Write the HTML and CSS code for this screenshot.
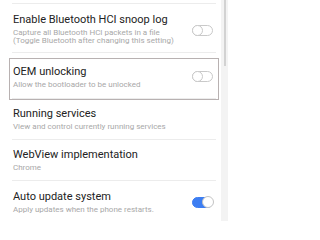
FILE: index.html
```html
<!DOCTYPE html>
<html>
<head>
<meta charset="utf-8">
<link rel="stylesheet" href="styles.css">
</head>
<body>
<div class="screen">
  <div class="list">
    <div class="divider"></div>
    <div class="item item-first">
      <div class="text">
        <div class="title">Enable Bluetooth HCI snoop log</div>
        <div class="sub">Capture all Bluetooth HCI packets in a file<br>(Toggle Bluetooth after changing this setting)</div>
      </div>
      <div class="toggle toggle-low"><span class="knob"></span></div>
    </div>
    <div class="divider"></div>
    <div class="item item-oem">
      <div class="text">
        <div class="title">OEM unlocking</div>
        <div class="sub">Allow the bootloader to be unlocked</div>
      </div>
      <div class="toggle"><span class="knob"></span></div>
      <div class="highlight"></div>
    </div>
    <div class="divider"></div>
    <div class="item">
      <div class="text">
        <div class="title">Running services</div>
        <div class="sub">View and control currently running services</div>
      </div>
    </div>
    <div class="divider"></div>
    <div class="item">
      <div class="text">
        <div class="title">WebView implementation</div>
        <div class="sub">Chrome</div>
      </div>
    </div>
    <div class="divider"></div>
    <div class="item item-last">
      <div class="text">
        <div class="title">Auto update system</div>
        <div class="sub">Apply updates when the phone restarts.</div>
      </div>
      <div class="toggle on"><span class="knob"></span></div>
    </div>
  </div>
  <div class="gutter"><div class="thumb"></div></div>
</div>
</body>
</html>
```

FILE: styles.css
```css
html, body {
  margin: 0;
  padding: 0;
  background: #ffffff;
}
body {
  font-family: Roboto, "Liberation Sans", sans-serif;
  width: 228px;
  height: 221px;
  overflow: hidden;
}
.screen {
  display: flex;
  height: 221px;
}
.list {
  width: 221px;
  padding-top: 3px;
  background: #ffffff;
}
.divider {
  height: 1px;
  margin: 0 5px 0 12px;
  background: #ececec;
}
.item {
  position: relative;
  display: flex;
  align-items: center;
  padding: 8px 8px 7.5px 13px;
}
.item-first {
  padding-top: 8.5px;
}
.item-oem {
  padding-top: 11.5px;
  padding-bottom: 9px;
}
.item-last {
  padding-top: 9px;
}
.text {
  flex: 1;
  display: flex;
  flex-direction: column;
  gap: 3px;
}
.title {
  font-size: 11px;
  line-height: 13px;
  color: #222222;
  white-space: nowrap;
}
.sub {
  font-size: 8px;
  line-height: 8.5px;
  color: #a8a8a8;
  white-space: nowrap;
}
.item-first .sub {
  line-height: 8px;
}
.toggle {
  position: relative;
  width: 19px;
  height: 9px;
  border: 1px solid #c9c9c9;
  border-radius: 6px;
  background: #ffffff;
  flex: none;
}
.toggle-low {
  margin-top: 4px;
}
.knob {
  position: absolute;
  left: -1px;
  top: -1px;
  width: 9px;
  height: 9px;
  border: 1px solid #c9c9c9;
  border-radius: 50%;
  background: #ffffff;
}
.toggle.on {
  background: #3d7ef2;
  border-color: #3d7ef2;
}
.toggle.on .knob {
  left: auto;
  right: -2px;
  top: -1.5px;
  width: 10px;
  height: 10px;
  border-color: #c4c4c4;
}
.highlight {
  position: absolute;
  left: 9px;
  top: 5px;
  width: 208px;
  height: 40px;
  border: 1px solid #b8b1b1;
  pointer-events: none;
}
.gutter {
  width: 7px;
  background: #f3f3f3;
  padding-left: 3px;
  box-sizing: border-box;
}
.thumb {
  width: 2px;
  height: 66px;
  background: #d2d2d2;
}
```
